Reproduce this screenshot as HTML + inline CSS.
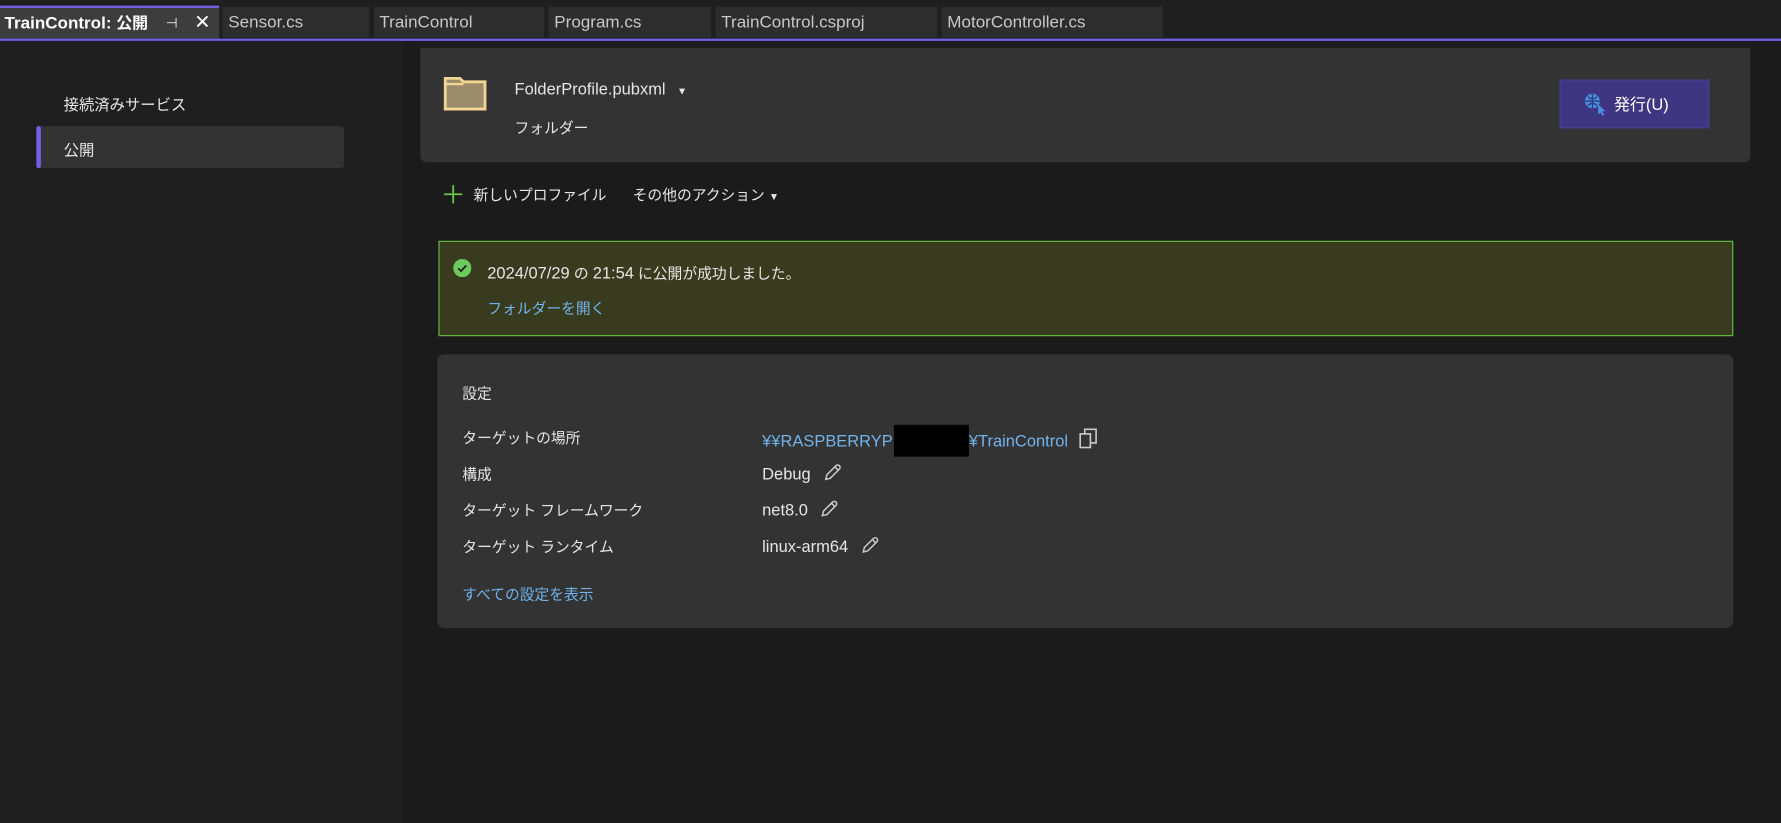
<!DOCTYPE html>
<html><head><meta charset="utf-8"><style>
html,body{margin:0;padding:0;background:#1b1b1b;width:1781px;height:823px;overflow:hidden}
#w{position:absolute;left:0;top:0;width:1568px;height:725px;transform:scale(1.13584);transform-origin:0 0;background:#1b1b1b;font-family:"Liberation Sans","Noto Sans CJK JP",sans-serif;font-size:13px;color:#e6e6e6}
.a{position:absolute;white-space:nowrap}
.l{font-size:14.5px}
.tab{position:absolute;top:6px;height:27px;background:#2d2d2d;color:#c8c8c8;line-height:27px;padding-left:5px;box-sizing:border-box;font-size:15px}
.lnk{color:#71b3ec}
.pen{display:inline-block;vertical-align:-3px}
</style></head><body><div id="w">
<div class="a" style="left:0;top:0;width:1568px;height:34px;background:#1f1f1f"></div>
<div class="tab" style="left:0;top:5px;width:193px;height:29px;background:#3d3d3d;color:#fff;font-weight:bold;border-top:2px solid #7160e8;line-height:26px;padding-left:4px">TrainControl: <span style="font-size:14px">公開</span><span style="position:absolute;left:146px;font-weight:normal;font-size:12px">⊣</span><span style="position:absolute;left:171px;font-weight:normal;font-size:17px">✕</span></div>
<div class="tab" style="left:196px;width:129px">Sensor.cs</div>
<div class="tab" style="left:329px;width:150px">TrainControl</div>
<div class="tab" style="left:483px;width:143px">Program.cs</div>
<div class="tab" style="left:630px;width:195px">TrainControl.csproj</div>
<div class="tab" style="left:829px;width:195px">MotorController.cs</div>
<div class="a" style="left:0;top:34px;width:1568px;height:2px;background:#7160e8"></div>
<div class="a" style="left:0;top:36px;width:354px;height:689px;background:#1f1f1f"></div>
<div class="a" style="left:56px;top:81px;font-size:13.5px">接続済みサービス</div>
<div class="a" style="left:32px;top:111px;width:271px;height:37px;background:#333;border-radius:3px"></div>
<div class="a" style="left:32px;top:111px;width:4px;height:37px;background:#7160e8;border-radius:2px"></div>
<div class="a" style="left:56px;top:121px;font-size:13.5px">公開</div>
<div class="a" style="left:370px;top:42px;width:1171px;height:101px;background:#333;border-radius:0 0 6px 6px"></div>
<svg class="a" style="left:390px;top:66px" width="40" height="33" viewBox="0 0 40 33"><path d="M2 3h13l3 3h19v24H2z" fill="#9b8d6b" stroke="#f1d592" stroke-width="2.5"/><path d="M2 8h16" stroke="#f1d592" stroke-width="2"/></svg>
<div class="a l" style="left:453px;top:71px">FolderProfile.pubxml <span style="font-size:9px;margin-left:6px">▼</span></div>
<div class="a" style="left:453px;top:102px">フォルダー</div>
<div class="a" style="left:1373px;top:70px;width:132px;height:43px;background:#3f3682;border:1px solid #4a3f95;box-sizing:border-box"></div>
<svg class="a" style="left:1394px;top:81px" width="22" height="22" viewBox="0 0 22 22"><circle cx="8" cy="8" r="6.5" fill="#4b8fe0"/><path d="M2 8h13M8 2v13M4 4q4 4 8 0M4 12q4-4 8 0" stroke="#2a3f80" stroke-width="1.2" fill="none"/><path d="M13 11l0 9 2-2 2 3 1.5-1-2-3 3 0z" fill="#4b8fe0"/></svg>
<div class="a" style="left:1421px;top:82px;color:#fff;font-size:14px">発行<span class="l">(U)</span></div>
<svg class="a" style="left:390px;top:162px" width="18" height="18"><path d="M9 1v16M1 9h16" stroke="#6cc644" stroke-width="1.6"/></svg>
<div class="a" style="left:417px;top:161px">新しいプロファイル</div>
<div class="a" style="left:557px;top:161px">その他のアクション <span style="font-size:9px">▼</span></div>
<div class="a" style="left:386px;top:212px;width:1140px;height:84px;background:#393b1e;border:1px solid #63bc46;box-sizing:border-box"></div>
<svg class="a" style="left:399px;top:228px" width="16" height="16"><circle cx="8" cy="8" r="8" fill="#6ccb5f"/><path d="M4.5 8.3l2.4 2.4 4.6-5" stroke="#1b1b1b" stroke-width="1.6" fill="none"/></svg>
<div class="a" style="left:429px;top:230px"><span class="l">2024/07/29</span> の <span class="l">21:54</span> に公開が成功しました。</div>
<div class="a lnk" style="left:429px;top:261px">フォルダーを開く</div>
<div class="a" style="left:385px;top:312px;width:1141px;height:241px;background:#333;border-radius:6px"></div>
<div class="a" style="left:407px;top:336px">設定</div>
<div class="a" style="left:407px;top:375px">ターゲットの場所</div>
<div class="a" style="left:407px;top:407px">構成</div>
<div class="a" style="left:407px;top:439px">ターゲット フレームワーク</div>
<div class="a" style="left:407px;top:471px">ターゲット ランタイム</div>
<div class="a l" style="left:671px;top:374px"><span class="lnk">¥¥RASPBERRYP<span style="display:inline-block;width:66px;height:28px;background:#000;vertical-align:-9px;margin-left:1px"></span>¥TrainControl</span><svg class="pen" style="margin-left:9px" width="20" height="20" viewBox="0 0 20 20"><rect x="2" y="6" width="9" height="12" fill="none" stroke="#ccc" stroke-width="1.4"/><path d="M6 6V2h10v12h-5" fill="none" stroke="#ccc" stroke-width="1.4"/></svg></div>
<div class="a l" style="left:671px;top:407px">Debug <svg class="pen" style="margin-left:6px" width="18" height="18"><path d="M3 15l1-4 8-8a2 2 0 0 1 3 3l-8 8z M11 4l3 3" fill="none" stroke="#ccc" stroke-width="1.3"/></svg></div>
<div class="a l" style="left:671px;top:439px">net8.0 <svg class="pen" style="margin-left:6px" width="18" height="18"><path d="M3 15l1-4 8-8a2 2 0 0 1 3 3l-8 8z M11 4l3 3" fill="none" stroke="#ccc" stroke-width="1.3"/></svg></div>
<div class="a l" style="left:671px;top:471px">linux-arm64 <svg class="pen" style="margin-left:6px" width="18" height="18"><path d="M3 15l1-4 8-8a2 2 0 0 1 3 3l-8 8z M11 4l3 3" fill="none" stroke="#ccc" stroke-width="1.3"/></svg></div>
<div class="a lnk" style="left:407px;top:513px">すべての設定を表示</div>
</div></body></html>
